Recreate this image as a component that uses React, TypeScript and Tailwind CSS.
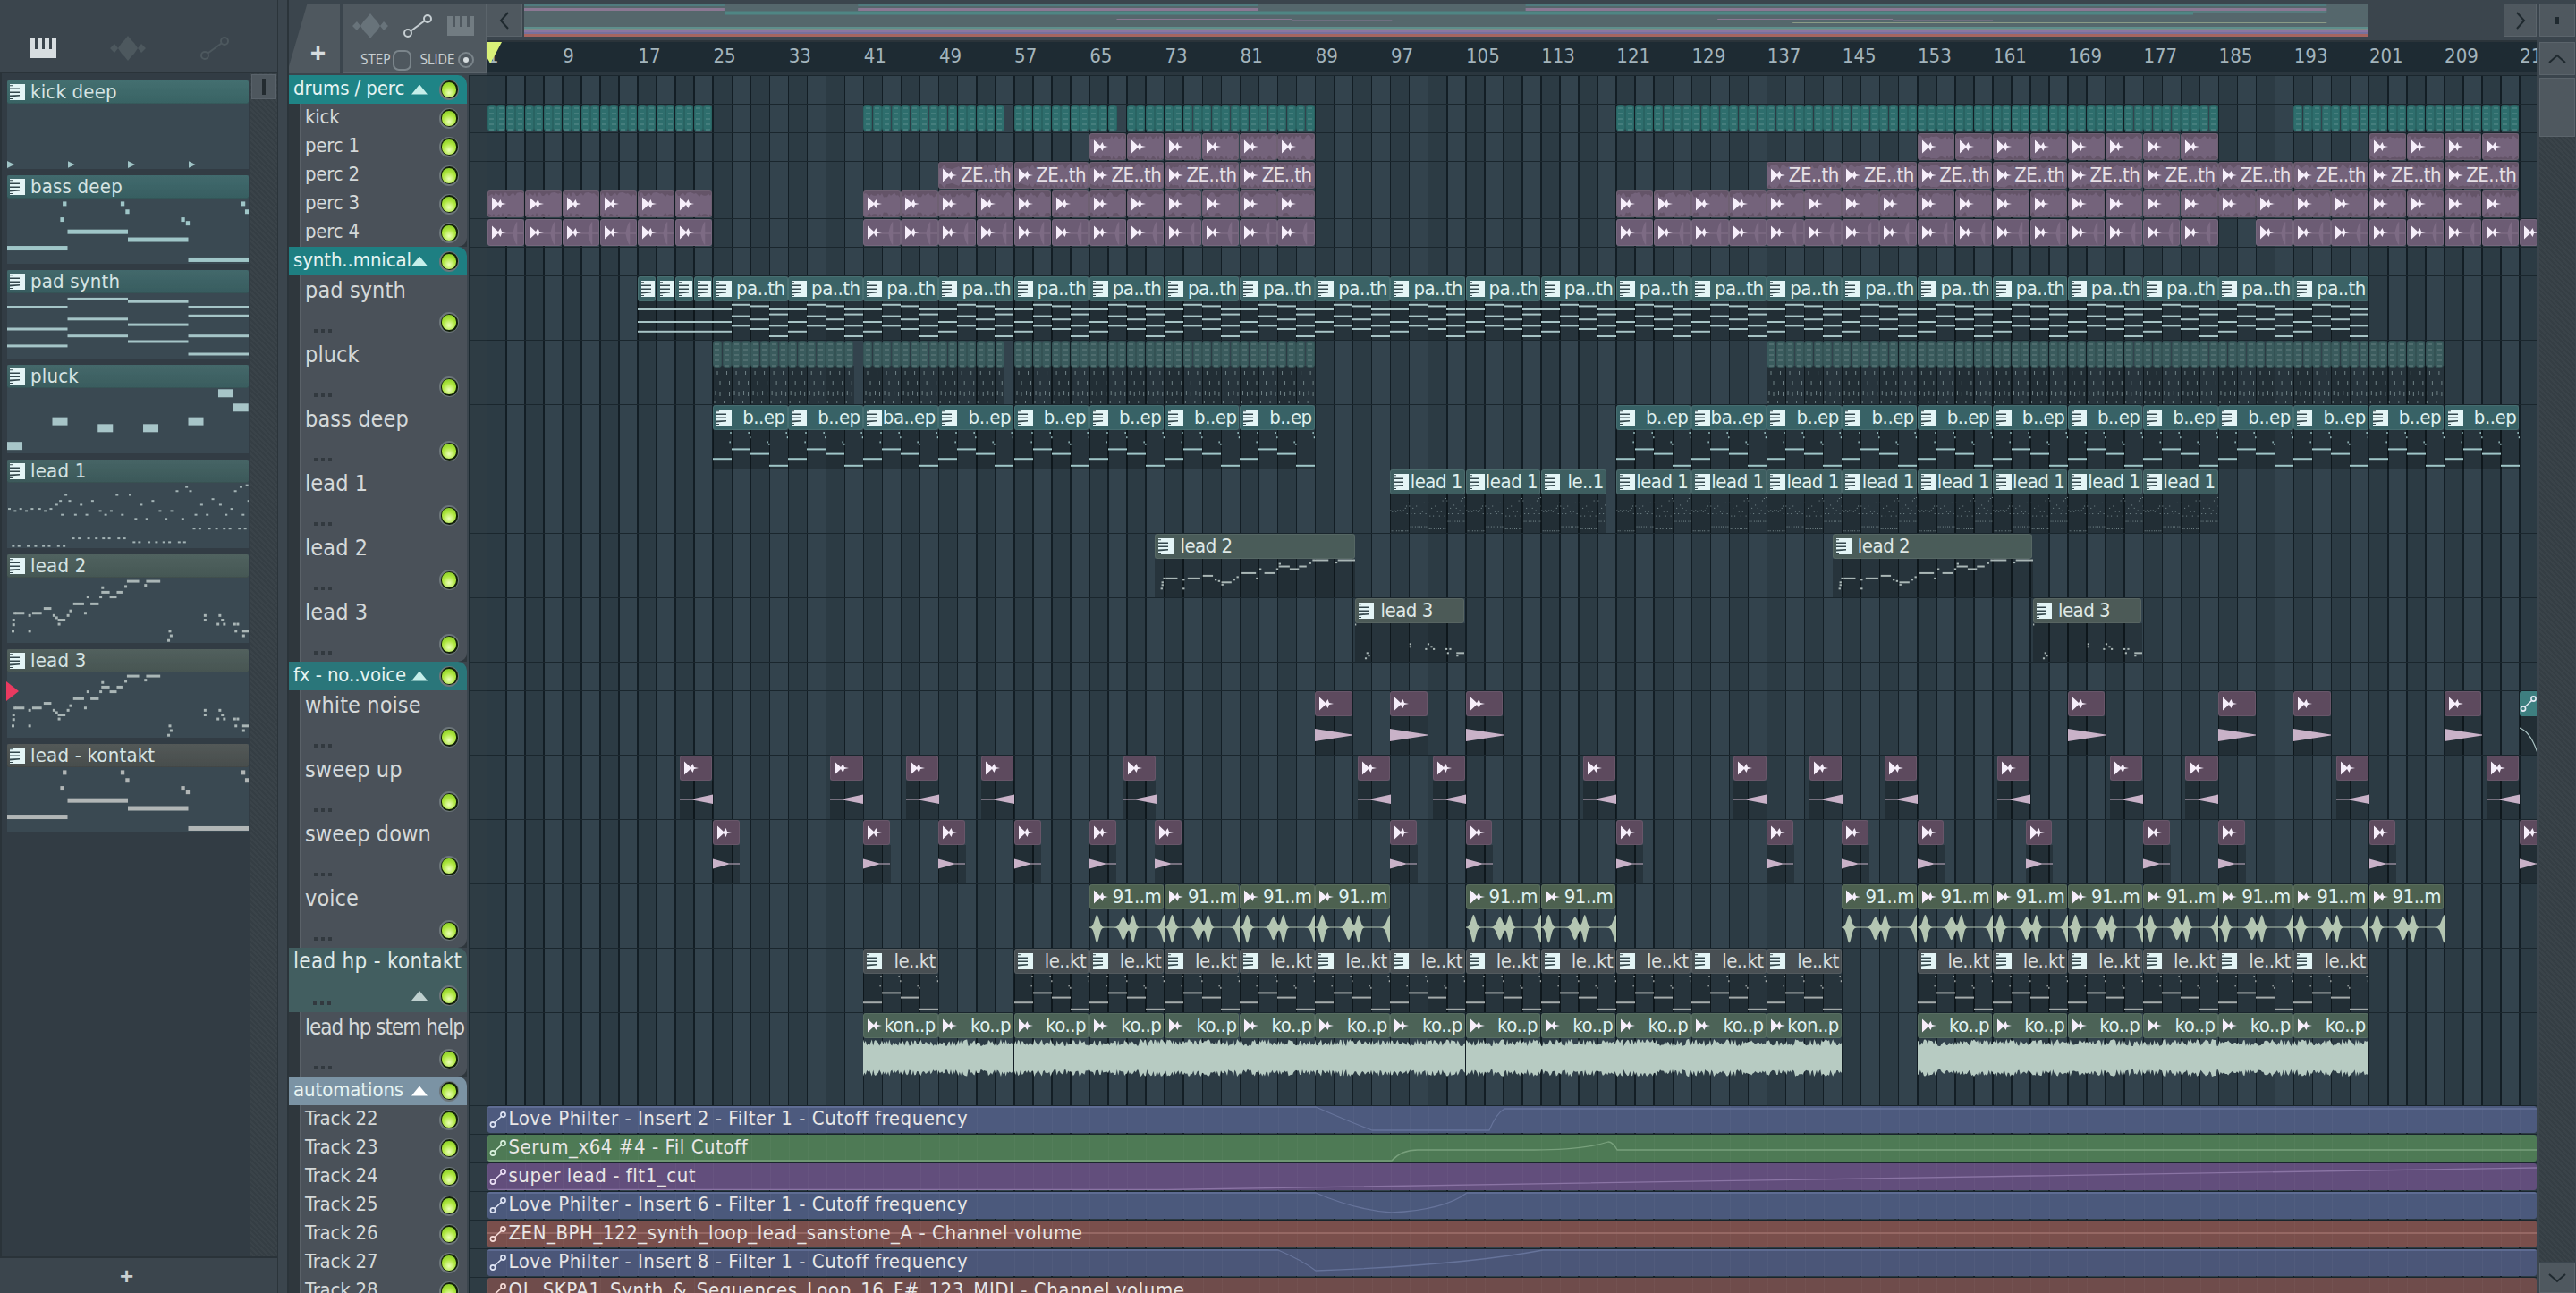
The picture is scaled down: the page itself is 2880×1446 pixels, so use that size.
import React from "react";

const BAR = 10.52;
const px = (bar: number) => (bar - 1) * BAR + 0.5;
const range = (a: number, b: number, s: number) => {
  const o: number[] = [];
  for (let i = a; i < b; i += s) o.push(i);
  return o;
};
const rnd = (i: number) => {
  const v = Math.sin(i * 12.9898) * 43758.5453;
  return v - Math.floor(v);
};

type Note = [number, number, number];
const BASS: Note[] = [
  [0, 0.78, 0.25], [0.25, 0.51, 0.25], [0.5, 0.64, 0.25], [0.75, 0.97, 0.25],
  [0.23, 0.05, 0.016], [0.22, 0.31, 0.016], [0.47, 0.05, 0.016], [0.49, 0.18, 0.016],
  [0.72, 0.31, 0.016], [0.74, 0.37, 0.016], [0.97, 0.05, 0.016], [0.985, 0.18, 0.015],
];
const PAD: Note[] = [
  [0, 0.2, 0.25], [0, 0.55, 0.25], [0, 0.82, 0.25],
  [0.25, 0.07, 0.25], [0.25, 0.39, 0.25], [0.25, 0.66, 0.25],
  [0.5, 0.11, 0.25], [0.5, 0.48, 0.25], [0.5, 0.75, 0.25],
  [0.75, 0.2, 0.25], [0.75, 0.34, 0.25], [0.75, 0.66, 0.25], [0.75, 0.95, 0.25],
];
const PLUCK: Note[] = [
  [0, 0.94, 0.063], [0.187, 0.51, 0.063], [0.375, 0.63, 0.063], [0.563, 0.63, 0.063],
  [0.75, 0.51, 0.063], [0.874, 0.02, 0.063], [0.937, 0.27, 0.062],
];
const L1: [number, number][] = [
  [27,510],[46,517],[65,510],[84,517],[103,510],[128,510],[147,517],[166,510],[185,496],[198,483],[216,463],[229,483],[204,530],[248,530],[267,496],[286,530],[305,483],[331,517],[349,530],[368,517],[387,463],[405,530],[431,463],[450,544],[468,496],[487,544],[507,483],[531,517],[551,544],[570,517],[588,450],[607,544],[620,436],[633,450],[651,530],[670,496],[689,530],[708,477],[733,496],[752,530],[771,510],[783,450],[802,436],[809,530],[822,430],[828,483],
  ...[40,59,90,115,141,160,191,210].map((x) => [x, 636] as [number, number]),
  ...[241,261,292,318,342,361,393,412].map((x) => [x, 610] as [number, number]),
  ...[444,462,494,519,544,563,595,613].map((x) => [x, 623] as [number, number]),
  ...[645,664,696,720,746,765,797,816].map((x) => [x, 577] as [number, number]),
];
const LEAD1: Note[] = L1.map(([x, y]) => [(x - 24) / 808, (y - 425) / 215, 0.005]);
const mk = (x1: number, x2: number, y: number): Note => [(x1 - 22) / 754, (y - 142) / 216, (x2 - x1) / 754];
const LEAD2: Note[] = [
  mk(48,76,260), mk(100,130,260), mk(136,160,244), mk(180,204,284), mk(228,262,228), mk(282,308,228),
  mk(316,342,188), mk(342,364,204), mk(364,382,188), mk(396,434,150), mk(456,500,150), mk(756,776,322),
  ...[[38,284],[38,300],[36,322],[88,322],[88,268],[42,260],[164,268],[172,276],[180,298],[208,268],[216,252],[270,204],[262,260],[316,172],[310,204],[388,168],[450,164],[526,322],[530,338],[522,354],[636,268],[636,284],[682,268],[676,298],[690,284],[696,298],[728,298],[738,298],[732,322],[756,338]].map(([x, y]) => mk(x, x + 5, y)),
];

function Notes({ notes, w, h, color, t, from = 0, to = 1, opacity = 1, minW = 1 }: { notes: Note[]; w: number; h: number; color: string; t: number; from?: number; to?: number; opacity?: number; minW?: number }) {
  const k = w / (to - from);
  return (
    <svg width={w} height={h} className="block" style={{ opacity }}>
      {notes.filter((n) => n[0] + n[2] > from && n[0] < to).map((n, i) => (
        <rect key={i} x={(n[0] - from) * k} y={n[1] * (h - t)} width={Math.max(minW, n[2] * k)} height={t} fill={color} />
      ))}
    </svg>
  );
}

function PianoGlyph() {
  return (
    <svg width="17" height="18" viewBox="0 0 17 18" className="shrink-0">
      <rect width="17" height="18" fill="#e4f5f6" />
      <path d="M0 4.5h11v1.6H0zM0 8.5h11v1.6H0zM0 12.5l11-.6v1.6L0 14.5z" fill="#33474c" />
      <path d="M0 1.2h3v1H0zM0 16h3v1H0z" fill="#33474c" />
    </svg>
  );
}
function AudioGlyph() {
  return (
    <svg width="18" height="16" viewBox="0 0 18 16" className="shrink-0">
      <path d="M1 0.5 L8 7 L10.5 3 L12 7 L17 8 L12 9 L10.5 13 L8 9 L1 15.5 Z" fill="#f6eefa" />
    </svg>
  );
}
function AutoGlyph({ color = "#e6eaf4" }: { color?: string }) {
  return (
    <svg width="20" height="20" viewBox="0 0 20 20" className="shrink-0">
      <circle cx="4" cy="15.5" r="2.6" fill="none" stroke={color} strokeWidth="1.6" />
      <circle cx="15.5" cy="4.5" r="2.6" fill="none" stroke={color} strokeWidth="1.6" />
      <path d="M6 13.5 L13.5 6.5" stroke={color} strokeWidth="1.6" />
    </svg>
  );
}
function PianoIcon({ color, dark }: { color: string; dark: string }) {
  return (
    <svg width="30" height="22" viewBox="0 0 30 22">
      <rect width="30" height="22" fill={color} />
      <path d="M6 0h3v12H6zM14 0h3v12h-3zM22 0h3v12h-3z" fill={dark} />
    </svg>
  );
}
function WaveIcon({ color }: { color: string }) {
  return (
    <svg width="40" height="28" viewBox="0 0 40 28">
      <path d="M0 14 L5 9 L9 14 L13 8 L16 5 L20 0 L24 5 L27 8 L31 14 L35 9 L40 14 L35 19 L31 14 L27 20 L24 23 L20 28 L16 23 L13 20 L9 14 L5 19 Z" fill={color} />
    </svg>
  );
}
function CurveIcon({ color }: { color: string }) {
  return (
    <svg width="34" height="28" viewBox="0 0 34 28">
      <circle cx="6" cy="22" r="4" fill="none" stroke={color} strokeWidth="2" />
      <circle cx="28" cy="6" r="4" fill="none" stroke={color} strokeWidth="2" />
      <path d="M9.5 19.5 L24.5 8.5" stroke={color} strokeWidth="2" />
    </svg>
  );
}

function Led() {
  return (
    <div className="w-[22px] h-[23px] rounded-full bg-[#6d767b] p-[1.5px] shrink-0">
      <div className="w-full h-full rounded-full bg-[#12200a] p-[1.5px]">
        <div className="w-full h-full rounded-full bg-[radial-gradient(circle_at_50%_70%,#eaffb8_0%,#aee63f_50%,#7cc31c_100%)]" />
      </div>
    </div>
  );
}
function Dots() {
  return (
    <div className="flex gap-[4px]">
      <div className="w-[4px] h-[4px] bg-[#32393f]" />
      <div className="w-[4px] h-[4px] bg-[#32393f]" />
      <div className="w-[4px] h-[4px] bg-[#32393f]" />
    </div>
  );
}
function Tri({ color }: { color: string }) {
  return <div className="w-[18px] h-[11px] shrink-0 [clip-path:polygon(50%_0,100%_100%,0_100%)]" style={{ background: color }} />;
}

type RowKind = "group" | "short" | "tall" | "sub";
function Header({ kind, label, bg, tri, round, tight }: { kind: RowKind; label: string; bg?: string; tri?: string; round?: boolean; tight?: boolean }) {
  if (kind === "group") {
    return (
      <div className="w-[199px] h-full rounded-tr-[10px] flex items-center pl-[5px] pr-[9px]" style={{ background: bg }}>
        <div className="flex-1 min-w-0 -mt-[3px] text-[22px] tracking-[-0.1px] text-[#e6f4f3] whitespace-nowrap">{label}</div>
        <Tri color={tri || "#c6efea"} />
        <div className="ml-[13px]"><Led /></div>
      </div>
    );
  }
  if (kind === "sub") {
    return (
      <div className="w-[199px] h-full rounded-tr-[10px] relative" style={{ background: bg }}>
        <div className="pl-[5px] pt-[1px] text-[24px] tracking-[0.3px] leading-[28px] text-[#dfe9e8] whitespace-nowrap">{label}</div>
        <div className="absolute left-[27px] top-[60px]"><Dots /></div>
        <div className="absolute right-[9px] top-[42px] flex items-center gap-[13px]"><Tri color="#bfd0cf" /><Led /></div>
      </div>
    );
  }
  const body = kind === "short" ? (
    <div className="h-full flex items-center pl-[5px] pr-[9px]">
      <div className="flex-1 -mt-[3px] text-[22px] tracking-[-0.2px] text-[#d5d9da] whitespace-nowrap">{label}</div>
      <Led />
    </div>
  ) : (
    <div className="h-full relative">
      <div className={`pl-[5px] pt-[3px] leading-[28px] text-[#d5d9da] whitespace-nowrap ${tight ? "text-[24px] tracking-[-1px]" : "text-[25px] tracking-[0.1px]"}`}>{label}</div>
      <div className="absolute left-[15px] top-[60px]"><Dots /></div>
      <div className="absolute right-[9px] top-[41px]"><Led /></div>
    </div>
  );
  return (
    <div className="w-[199px] h-full flex bg-[#2f373d]">
      <div className={`ml-[12px] flex-1 bg-[#4a5159] border-l border-[#5a6168] ${round ? "rounded-br-[10px]" : ""}`}>{body}</div>
    </div>
  );
}

function Clip({ bar, bars, bg, label, icon = "piano", h = 28, textClass = "text-[#dff0ef]", left, children }: { bar: number; bars: number; bg: string; label?: string; icon?: "piano" | "audio" | "none"; h?: number; textClass?: string; left?: boolean; children?: React.ReactNode }) {
  const w = bars * BAR - 0.6;
  return (
    <div className="absolute top-[1px]" style={{ left: px(bar), width: w }}>
      <div className="relative rounded-[3px] overflow-hidden flex items-center pl-[3px] border border-[#ffffff12]" style={{ height: h, background: bg }}>
        {children}
        {icon === "piano" && <div className="relative"><PianoGlyph /></div>}
        {icon === "audio" && <div className="relative"><AudioGlyph /></div>}
        {label && <div className={`relative flex-1 pr-[2px] -mt-[2px] text-[22px] tracking-[-0.5px] whitespace-nowrap ${left ? "pl-[7px]" : "text-right"} ${textClass}`}>{label}</div>}
      </div>
    </div>
  );
}
function Body({ bar, bars, top = 29, h = 43, children }: { bar: number; bars: number; top?: number; h?: number; children?: React.ReactNode }) {
  return (
    <div className="absolute bg-[#00000038]" style={{ left: px(bar), width: bars * BAR, top, height: h }}>
      {children}
    </div>
  );
}

function ragged(w: number, h: number, seed: number, base: number, amp: number, step = 2) {
  let top = "";
  let bot = "";
  for (let x = 0; x <= w; x += step) {
    const a = base + rnd(seed + x) * amp;
    top += `${x},${(h / 2 - a).toFixed(1)} `;
    bot = `${x},${(h / 2 + a).toFixed(1)} ` + bot;
  }
  return top + bot;
}
function PercWave({ w, seed }: { w: number; seed: number }) {
  return (
    <svg width={w} height={30} className="absolute left-0 top-0">
      <polygon points={ragged(w, 30, seed, 8, 6)} fill="#74637b" />
    </svg>
  );
}
function Perc4Wave({ w }: { w: number }) {
  const c = w * 0.72;
  return (
    <svg width={w} height={30} className="absolute left-0 top-0">
      <path d={`M${w * 0.3} 15 H${w} `} stroke="#85738a" strokeWidth="1" />
      <path d={`M${c - 3} 15 Q${c} 2 ${c + 2} 2 V28 Q${c} 28 ${c - 3} 15Z`} fill="#7d6b84" />
    </svg>
  );
}

function kickSegs(bars: number[], bg: string) {
  return bars.map((b) => (
    <div key={b} className="absolute top-[1px] h-[30px] rounded-[4px] flex justify-center border border-[#00000018]" style={{ left: px(b), width: BAR - 0.5, background: bg }}>
      <div className="w-[5px] h-full bg-[repeating-linear-gradient(0deg,#ffffff1c_0px,#ffffff1c_2px,transparent_2px,transparent_6px)]" />
    </div>
  ));
}

function VoiceWave({ w }: { w: number }) {
  const blobs = [[0.1, 0.04, 1], [0.45, 0.05, 0.8], [0.58, 0.035, 1], [1, 0.05, 1]];
  let top = "";
  let bot = "";
  for (let i = 0; i <= 84; i += 1) {
    const x = i / 84;
    let a = 0.6;
    blobs.forEach(([c, s, p]) => {
      a += p * 17 * Math.exp(-(((x - c) / s) ** 2));
    });
    top += `${(x * w).toFixed(1)},${(20 - a * 0.8).toFixed(1)} `;
    bot = `${(x * w).toFixed(1)},${(20 + a).toFixed(1)} ` + bot;
  }
  return (
    <svg width={w} height={42} className="block">
      <polygon points={top + bot} fill="#b4c6b2" />
    </svg>
  );
}

function LaneClips({ id }: { id: string }): React.ReactElement | null {
  const perc = "#645468";
  switch (id) {
    case "kick":
      return <>{kickSegs([...range(1, 25, 1), ...range(41, 56, 1), ...range(57, 68, 1), ...range(69, 89, 1), ...range(121, 185, 1), ...range(193, 217, 1)], "#2e6e6d")}</>;
    case "perc1":
      return <>{[...range(65, 89, 4), ...range(153, 185, 4), ...range(201, 217, 4)].map((b) => <Clip key={b} bar={b} bars={4} bg={perc} icon="audio" h={30}><PercWave w={42} seed={b} /></Clip>)}</>;
    case "perc2":
      return <>{[...range(49, 89, 8), ...range(137, 217, 8)].map((b) => <Clip key={b} bar={b} bars={8} bg={perc} icon="audio" h={30} label="ZE..th" textClass="text-[#e6e0e6]"><PercWave w={84} seed={b} /></Clip>)}</>;
    case "perc3":
      return <>{[...range(1, 25, 4), ...range(41, 89, 4), ...range(121, 217, 4)].map((b) => <Clip key={b} bar={b} bars={4} bg={perc} icon="audio" h={30}><PercWave w={42} seed={b + 300} /></Clip>)}</>;
    case "perc4":
      return <>{[...range(1, 25, 4), ...range(41, 89, 4), ...range(121, 185, 4), ...range(189, 217, 4)].map((b) => <Clip key={b} bar={b} bars={4} bg="#6c5c74" icon="audio" h={30}><Perc4Wave w={42} /></Clip>)}<Clip bar={217} bars={2} bg="#6c5c74" icon="audio" h={30} /></>;
    case "pad":
      return (
        <>
          <Body bar={17} bars={184} />
          {range(17, 25, 2).map((b) => (
            <React.Fragment key={b}>
              <Clip bar={b} bars={2} bg="#3b6366" />
              <div className="absolute top-[29px]" style={{ left: px(b) }}>
                <Notes notes={[[0, 0.2, 1], [0, 0.55, 1], [0, 0.82, 1]]} w={21.04} h={42} color="#a8c4c6" t={2} />
              </div>
            </React.Fragment>
          ))}
          {range(25, 201, 8).map((b) => (
            <React.Fragment key={b}>
              <Clip bar={b} bars={8} bg="#3b6366" label="pa..th" />
              <div className="absolute top-[29px]" style={{ left: px(b) }}>
                <Notes notes={PAD} w={84} h={42} color="#a8c4c6" t={2} />
              </div>
            </React.Fragment>
          ))}
        </>
      );
    case "pluck": {
      const groups = [[25, 40], [41, 56], [57, 89], [137, 209]];
      return (
        <>
          {groups.map(([a, b]) => (
            <React.Fragment key={a}>
              <Body bar={a} bars={b - a} />
              {kickSegs(range(a, b, 1), "#3a5b5d")}
              <svg className="absolute top-[31px]" style={{ left: px(a) }} width={(b - a) * BAR} height={40}>
                {range(0, b - a, 1).map((i) => (
                  <g key={i} stroke="#6f8185" strokeWidth="1">
                    <path d={`M${i * BAR + 5} 4v4M${i * BAR + 8} 15v4M${i * BAR + 3} 26v5M${i * BAR + 8} 27v5M${i * BAR + 2} 37v3`} />
                  </g>
                ))}
              </svg>
            </React.Fragment>
          ))}
        </>
      );
    }
    case "bass":
      return (
        <>
          {[...range(25, 89, 8), ...range(121, 217, 8)].map((b) => (
            <React.Fragment key={b}>
              <Body bar={b} bars={8} />
              <Clip bar={b} bars={8} bg="#386266" label={b === 41 || b === 129 ? "ba..ep" : "b..ep"} />
              <div className="absolute top-[29px]" style={{ left: px(b) }}>
                <Notes notes={BASS} w={84} h={42} color="#a0c6c8" t={2} />
              </div>
            </React.Fragment>
          ))}
        </>
      );
    case "lead1":
      return (
        <>
          {[[97, 8, "lead 1"], [105, 8, "lead 1"], [113, 7, "le..1"], ...range(121, 185, 8).map((b) => [b, 8, "lead 1"])].map(([b, n, l]) => (
            <React.Fragment key={b as number}>
              <Body bar={b as number} bars={n as number} />
              <Clip bar={b as number} bars={n as number} bg="#3e5e60" label={l as string} />
              <div className="absolute top-[31px] overflow-hidden" style={{ left: px(b as number), width: (n as number) * BAR }}>
                <Notes notes={LEAD1} w={84} h={40} color="#7b8d91" t={1} />
              </div>
            </React.Fragment>
          ))}
        </>
      );
    case "lead2":
      return (
        <>
          {[72, 144].map((b) => (
            <React.Fragment key={b}>
              <Body bar={b} bars={21.3} />
              <Clip bar={b} bars={21.3} bg="#4a5c59" label="lead 2" left textClass="text-[#dfe8e6]" />
              <div className="absolute top-[28px]" style={{ left: px(b) }}>
                <Notes notes={LEAD2} w={224} h={42} color="#aab7b6" t={2} from={0} to={0.63} />
              </div>
            </React.Fragment>
          ))}
        </>
      );
    case "lead3":
      return (
        <>
          {[93.3, 165.3].map((b) => (
            <React.Fragment key={b}>
              <Body bar={b} bars={11.6} />
              <Clip bar={b} bars={11.6} bg="#4c5a57" label="lead 3" left textClass="text-[#dfe8e6]" />
              <div className="absolute top-[28px]" style={{ left: px(b) }}>
                <Notes notes={LEAD2} w={122} h={42} color="#aab7b6" t={2} from={0.63} to={1} />
              </div>
            </React.Fragment>
          ))}
        </>
      );
    case "noise":
      return (
        <>
          {[89, 97, 105, 169, 185, 193, 209].map((b) => (
            <React.Fragment key={b}>
              <Body bar={b} bars={4} />
              <Clip bar={b} bars={4} bg="#5d4a5e" icon="audio" />
              <svg className="absolute top-[40px]" style={{ left: px(b) }} width={42} height={20}>
                <path d="M0 3 L42 9.5 V10.5 L0 17Z" fill="#c9b2c8" />
              </svg>
            </React.Fragment>
          ))}
          <Body bar={217} bars={2} />
          <div className="absolute top-[1px] h-[28px] rounded-[3px] bg-[#3e7f80] flex items-center" style={{ left: px(217), width: 24 }}><AutoGlyph /></div>
          <svg className="absolute top-[30px]" style={{ left: px(217) }} width={21} height={40}><path d="M0 12 Q12 16 20 40" stroke="#a9c2c2" strokeWidth="1.2" fill="none" /></svg>
        </>
      );
    case "up":
      return (
        <>
          {[21.5, 37.5, 45.5, 53.5, 68.6, 93.5, 101.5, 117.5, 133.5, 141.5, 149.5, 161.5, 173.5, 181.5, 197.5, 213.5].map((b) => (
            <React.Fragment key={b}>
              <Body bar={b} bars={3.5} />
              <Clip bar={b} bars={3.5} bg="#5d4a5e" icon="audio" />
              <svg className="absolute top-[40px]" style={{ left: px(b) }} width={37} height={20}>
                <path d="M0 9.5 H14 L37 4.5 V15 L14 10.5 H0Z" fill="#c9b2c8" />
              </svg>
            </React.Fragment>
          ))}
        </>
      );
    case "down":
      return (
        <>
          {[25, 41, 49, 57, 65, 72, 97, 105, 121, 137, 145, 153, 164.5, 177, 185, 201, 217].map((b) => (
            <React.Fragment key={b}>
              <Body bar={b} bars={2.9} />
              <Clip bar={b} bars={2.9} bg="#5d4a5e" icon="audio" />
              <svg className="absolute top-[40px]" style={{ left: px(b) }} width={30} height={20}>
                <path d="M0 4.5 L18 9.5 H30 V10.5 H18 L0 15.5Z" fill="#c9b2c8" />
              </svg>
            </React.Fragment>
          ))}
        </>
      );
    case "voice":
      return (
        <>
          {[...range(65, 97, 8), ...range(105, 121, 8), ...range(145, 209, 8)].map((b) => (
            <React.Fragment key={b}>
              <Clip bar={b} bars={8} bg="#4d6150" icon="audio" label="91..m" />
              <div className="absolute top-[29px]" style={{ left: px(b) }}><VoiceWave w={84} /></div>
            </React.Fragment>
          ))}
        </>
      );
    case "hp":
      return (
        <>
          {[41, ...range(57, 145, 8), ...range(153, 201, 8)].map((b) => (
            <React.Fragment key={b}>
              <Body bar={b} bars={8} />
              <Clip bar={b} bars={8} bg="#484f53" label="le..kt" textClass="text-[#d8dcdc]" />
              <div className="absolute top-[29px]" style={{ left: px(b) }}>
                <Notes notes={BASS} w={84} h={42} color="#a5abab" t={2} />
              </div>
            </React.Fragment>
          ))}
        </>
      );
    case "stem":
      return (
        <>
          {[...range(41, 145, 8), ...range(153, 201, 8)].map((b) => (
            <React.Fragment key={b}>
              <Clip bar={b} bars={8} bg="#4c6357" icon="audio" label={b === 41 || b === 137 ? "kon..p" : "ko..p"} />
              <svg className="absolute top-[30px]" style={{ left: px(b) }} width={85} height={42}>
                <polygon points={ragged(85, 42, b, 13, 8, 1.4)} fill="#b7cbc2" />
              </svg>
            </React.Fragment>
          ))}
        </>
      );
    default:
      return null;
  }
}

const G1 = "#1f8486";
const rows: { kind: RowKind; label: string; id?: string; bg?: string; tri?: string; round?: boolean; tight?: boolean }[] = [
  { kind: "group", label: "drums / perc", bg: G1 },
  { kind: "short", label: "kick", id: "kick" },
  { kind: "short", label: "perc 1", id: "perc1" },
  { kind: "short", label: "perc 2", id: "perc2" },
  { kind: "short", label: "perc 3", id: "perc3" },
  { kind: "short", label: "perc 4", id: "perc4", round: true },
  { kind: "group", label: "synth..mnical", bg: "#1e7f82" },
  { kind: "tall", label: "pad synth", id: "pad" },
  { kind: "tall", label: "pluck", id: "pluck" },
  { kind: "tall", label: "bass deep", id: "bass" },
  { kind: "tall", label: "lead 1", id: "lead1" },
  { kind: "tall", label: "lead 2", id: "lead2" },
  { kind: "tall", label: "lead 3", id: "lead3", round: true },
  { kind: "group", label: "fx - no..voice", bg: "#2a767a" },
  { kind: "tall", label: "white noise", id: "noise" },
  { kind: "tall", label: "sweep up", id: "up" },
  { kind: "tall", label: "sweep down", id: "down" },
  { kind: "tall", label: "voice", id: "voice", round: true },
  { kind: "sub", label: "lead hp - kontakt", id: "hp", bg: "#425e60" },
  { kind: "tall", label: "lead hp stem help", id: "stem", round: true, tight: true },
  { kind: "group", label: "automations", bg: "#7b93a4", tri: "#ffffff" },
  { kind: "short", label: "Track 22", id: "a0" },
  { kind: "short", label: "Track 23", id: "a1" },
  { kind: "short", label: "Track 24", id: "a2" },
  { kind: "short", label: "Track 25", id: "a3" },
  { kind: "short", label: "Track 26", id: "a4" },
  { kind: "short", label: "Track 27", id: "a5" },
  { kind: "short", label: "Track 28", id: "a6" },
];

const autos: { text: string; bg: string; line: string; icon: string; curve?: string }[] = [
  { text: "Love Philter - Insert 2 - Filter 1 - Cutoff frequency", bg: "#4d5a7e", line: "#66739a", icon: "#dfe4f4", curve: "M0 1 H926 Q970 20 989 27 H1120 Q1128 8 1137 3 H2292" },
  { text: "Serum_x64 #4 - Fil Cutoff", bg: "#4e7a55", line: "#78a07c", icon: "#d8f0dc", curve: "M0 29 H1011 Q1022 17 1040 17 H1170 Q1225 17 1253 8 Q1258 8 1263 17 H2292" },
  { text: "super lead - flt1_cut", bg: "#624e7c", line: "#8a74a4", icon: "#ece0f6", curve: "M0 29.5 H759 L2292 5" },
  { text: "Love Philter - Insert 6 - Filter 1 - Cutoff frequency", bg: "#4b597c", line: "#66739a", icon: "#dfe4f4", curve: "M0 1 H926 Q970 20 1011 23 Q1070 20 1095 1 H2292" },
  { text: "ZEN_BPH_122_synth_loop_lead_sanstone_A - Channel volume", bg: "#7a4f4c", line: "#a0716c", icon: "#f6dcd8", curve: "M0 14 H2292" },
  { text: "Love Philter - Insert 8 - Filter 1 - Cutoff frequency", bg: "#4b5678", line: "#66739a", icon: "#dfe4f4", curve: "M0 1 H884 Q910 12 926 24 Q1090 18 1180 1 H2292" },
  { text: "OL_SKPA1_Synth_&_Sequences_Loop_16_F#_123_MIDI - Channel volume", bg: "#6f4c4b", line: "#8f6b68", icon: "#f6dcd8" },
];

function AutoClip({ a }: { a: (typeof autos)[number] }) {
  return (
    <div className="absolute left-[0.5px] right-0 top-[1px] h-[30px] rounded-[3px] overflow-hidden flex items-center pl-[2px] gap-[2px] bg-[repeating-linear-gradient(90deg,#ffffff08_0px,#ffffff08_1px,transparent_1px,transparent_21.04px)]" style={{ backgroundColor: a.bg }}>
      {a.curve && (
        <svg width={2292} height={30} className="absolute left-0 top-0">
          <path d={a.curve} fill="none" stroke={a.line} strokeWidth="1.3" />
        </svg>
      )}
      <div className="relative"><AutoGlyph color={a.icon} /></div>
      <div className="relative -mt-[3px] text-[22px] tracking-[0.55px] text-[#e8e6e6] whitespace-nowrap">{a.text}</div>
    </div>
  );
}

function PickerClip({ name, bg, glyphNotes, color, t, kick }: { name: string; bg: string; glyphNotes?: Note[]; color: string; t: number; kick?: boolean }) {
  return (
    <div className="w-[270px] h-[99px] flex flex-col bg-[#3a4952] shrink-0">
      <div className="h-[26px] rounded-[2px] flex items-center pl-[3px] gap-[6px] border-b border-[#00000030] bg-[linear-gradient(180deg,#ffffff08,#00000010)]" style={{ backgroundColor: bg }}>
        <PianoGlyph />
        <span className="text-[22px] tracking-[0.2px] text-[#d6e4e4] whitespace-nowrap">{name}</span>
      </div>
      <div className="flex-1 relative">
        {kick ? (
          <div className="h-full flex items-end pb-[1px]">
            {[0, 1, 2, 3].map((i) => (
              <div key={i} className="w-[67.5px]"><div className="w-[8px] h-[8px] bg-[#9fc4c6] [clip-path:polygon(0_0,100%_50%,0_100%)]" /></div>
            ))}
          </div>
        ) : (
          <Notes notes={glyphNotes || []} w={270} h={73} color={color} t={t} minW={3} />
        )}
      </div>
    </div>
  );
}

function Minimap() {
  const lanes: [number, number, string, number[][]][] = [
    [1.5, 1, "#4d9090", [[1, 25], [41, 89], [121, 217]]],
    [5, 3, "#8b7893", [[1, 25], [41, 89], [121, 217]]],
    [8.5, 4, "#4f8684", [[25, 201]]],
    [8.5, 1, "#5d8f8f", [[201, 217]]],
    [17, 1, "#8a7893", [[72, 93], [144, 165]]],
    [18.5, 1, "#8a7893", [[93, 105], [165, 177]]],
    [21, 1, "#8b9b86", [[153, 217]]],
  ];
  return (
    <svg width={2061} height={37} className="block">
      <rect width={2061} height={37} fill="#55676c" />
      {lanes.map(([y, h, c, spans], i) => (
        <g key={i}>
          {spans.map(([a, b], j) => <rect key={j} x={(a - 1) * 9.33} y={y} width={(b - a) * 9.33} height={h} fill={c} />)}
        </g>
      ))}
      <rect y={26} width={2061} height={2} fill="#5f8f8c" />
      <rect y={28} width={2061} height={2} fill="#7f8b88" />
      <rect y={30} width={2061} height={2} fill="#8a76a0" />
      <rect y={32} width={2061} height={2} fill="#76709c" />
      <rect y={34} width={2061} height={3} fill="#a5655f" />
    </svg>
  );
}

export default function App() {
  const pick: { name: string; bg: string; notes?: Note[]; color: string; t: number; kick?: boolean }[] = [
    { name: "kick deep", bg: "#3d6a6b", color: "", t: 0, kick: true },
    { name: "bass deep", bg: "#3b6568", notes: BASS, color: "#9fc6c8", t: 5 },
    { name: "pad synth", bg: "#3c6366", notes: PAD, color: "#a5c5c7", t: 3 },
    { name: "pluck", bg: "#3e6365", notes: PLUCK, color: "#a7c5c8", t: 9 },
    { name: "lead 1", bg: "#405f60", notes: LEAD1, color: "#a3b3b5", t: 2 },
    { name: "lead 2", bg: "#4a5d5a", notes: LEAD2, color: "#aab6b6", t: 3 },
    { name: "lead 3", bg: "#4c5b58", notes: LEAD2, color: "#aab6b6", t: 3 },
    { name: "lead - kontakt", bg: "#4d5352", notes: BASS, color: "#b1b6b6", t: 5 },
  ];
  return (
    <div className="w-[2880px] h-[1446px] flex overflow-hidden bg-[#3b454d] [font-family:'DejaVu_Sans',sans-serif] [font-stretch:condensed]">
      {/* Picker */}
      <div className="w-[311px] h-full flex flex-col shrink-0 border-r border-[#2b343a]">
        <div className="h-[82px] shrink-0 pt-[28px] flex items-center pl-[33px] gap-[60px] border-b-2 border-[#2a3339]">
          <PianoIcon color="#d8dee1" dark="#3b454d" />
          <WaveIcon color="#4d585e" />
          <CurveIcon color="#4d585e" />
        </div>
        <div className="flex-1 flex bg-[#323c44] border-l-2 border-[#2a3339] border-b-2 relative">
          <div className="w-[278px] flex flex-col gap-[7px] pl-[6px] pt-[8px]">
            {pick.map((p) => (
              <PickerClip key={p.name} name={p.name} bg={p.bg} glyphNotes={p.notes} color={p.color} t={p.t} kick={p.kick} />
            ))}
          </div>
          <div className="w-[31px] border-l border-[#2a3339] bg-[repeating-linear-gradient(45deg,#353e44_0px,#353e44_2px,#3a4349_2px,#3a4349_4px)]">
            <div className="h-[28px] mx-[1px] mt-[1px] bg-[#4e575e] border border-[#59626a] flex items-center justify-center">
              <div className="w-[4px] h-[18px] bg-[#232b30]" />
            </div>
          </div>
          <div className="absolute left-[5px] top-[680px] w-[14px] h-[22px] bg-[#ea3a60] [clip-path:polygon(0_0,100%_50%,0_100%)]" />
        </div>
        <div className="h-[39px] shrink-0 flex items-center pl-[134px]">
          <div className="text-[26px] font-bold leading-none text-[#c9cfd2] [font-family:'Liberation_Sans',sans-serif]">+</div>
        </div>
      </div>
      <div className="w-[12px] shrink-0 border-r-2 border-[#2b343a]" />
      {/* Track column */}
      <div className="w-[221px] h-full shrink-0 flex flex-col">
        <div className="h-[84px] shrink-0 flex pt-[4px] pb-[2px] gap-[3px] pr-[0px]">
          <div className="w-[57px] bg-[#4f585f] flex items-end justify-center pb-[8px] pl-[8px] [clip-path:polygon(36%_0,100%_0,100%_100%,0_100%,0_90%)]">
            <span className="text-[30px] font-bold leading-none text-[#d7dcdf] [font-family:'Liberation_Sans',sans-serif]">+</span>
          </div>
          <div className="flex-1 bg-[#4f585f] flex flex-col border border-[#5b646b]">
            <div className="h-[38px] flex items-center pl-[10px] gap-[16px] pt-[10px]">
              <WaveIcon color="#68737a" />
              <CurveIcon color="#c6ced2" />
              <PianoIcon color="#727c82" dark="#4f585f" />
            </div>
            <div className="flex-1 flex items-center pl-[19px] text-[15px] text-[#c6ced2] pt-[10px]">
              <span>STEP</span>
              <div className="w-[21px] h-[23px] rounded-[7px] border-2 border-[#7b858b] ml-[3px]" />
              <span className="ml-[9px]">SLIDE</span>
              <div className="w-[18px] h-[18px] rounded-full border-2 border-[#7b858b] ml-[4px] flex items-center justify-center"><div className="w-[6px] h-[6px] rounded-full bg-[#d6dcdf]" /></div>
            </div>
          </div>
        </div>
        <div className="flex-1 overflow-hidden">
          {rows.map((r, i) => (
            <div key={i} className={`flex ${r.kind === "short" || r.kind === "group" ? "h-[32px]" : "h-[72px]"}`}>
              <Header kind={r.kind} label={r.label} bg={r.bg} tri={r.tri} round={r.round} tight={r.tight} />
              <div className="ml-[2px] w-[20px] bg-[#2e3c44] border-t border-[#1c2930] border-l border-l-[#1c2930]" />
            </div>
          ))}
        </div>
      </div>
      {/* Timeline */}
      <div className="w-[2292px] h-full shrink-0 flex flex-col">
        <div className="h-[47px] shrink-0 flex items-center bg-[#3b454d] border-b-2 border-[#2b343a]">
          <div className="w-[40px] h-[37px] bg-[#4f585f] border border-[#5b646b] flex items-center justify-center">
            <svg width="14" height="24" viewBox="0 0 14 24"><path d="M11 3 L3 12 L11 21" fill="none" stroke="#1f292f" strokeWidth="2" /></svg>
          </div>
          <div className="ml-[2px] h-[37px]"><Minimap /></div>
          <div className="flex-1" />
          <div className="w-[37px] h-[37px] bg-[#4f585f] border border-[#5b646b] flex items-center justify-center">
            <svg width="14" height="24" viewBox="0 0 14 24"><path d="M3 3 L11 12 L3 21" fill="none" stroke="#1f292f" strokeWidth="2" /></svg>
          </div>
        </div>
        <div className="h-[37px] shrink-0 flex bg-[#1e2b33] border-b-4 border-[#2a363e] overflow-hidden relative">
          {range(1, 221, 8).map((b) => (
            <div key={b} className="w-[84.16px] shrink-0 pl-[1px] text-[22px] leading-[32px] text-[#a3b4bc] whitespace-nowrap">{b}</div>
          ))}
          <div className="absolute left-0 top-0 w-[17px] h-[24px] bg-[#d8f078] [clip-path:polygon(0_0,100%_0,25%_100%,0_70%)]" />
        </div>
        <div className="flex-1 overflow-hidden bg-[repeating-linear-gradient(90deg,#131e25_0px,#131e25_1.5px,#2c3b44_1.5px,#2c3b44_21.04px,#131e25_21.04px,#131e25_22.54px,#33434d_22.54px,#33434d_42.08px)]">
          {rows.map((r, i) => {
            const auto = r.id && r.id[0] === "a" && r.id.length === 2 ? autos[Number(r.id[1])] : null;
            return (
              <div key={i} className={`relative shadow-[inset_0_1px_0_#1a262d] ${r.kind === "short" || r.kind === "group" ? "h-[32px]" : "h-[72px]"}`}>
                {auto ? <AutoClip a={auto} /> : r.id ? <LaneClips id={r.id} /> : null}
              </div>
            );
          })}
        </div>
      </div>
      {/* Scroll column */}
      <div className="ml-[3px] w-[40px] h-full shrink-0 flex flex-col gap-[1px]">
        <div className="mt-[4px] h-[37px] bg-[#4f585f] border border-[#5b646b] flex items-center justify-center">
          <div className="w-[4px] h-[8px] bg-[#1f292f]" />
        </div>
        <div className="mt-[5px] h-[37px] bg-[#4f585f] border border-[#5b646b] flex items-center justify-center">
          <svg width="24" height="14" viewBox="0 0 24 14"><path d="M3 11 L12 3 L21 11" fill="none" stroke="#1f292f" strokeWidth="2" /></svg>
        </div>
        <div className="flex-1 mt-[2px] flex flex-col bg-[repeating-linear-gradient(45deg,#353e44_0px,#353e44_2px,#3a4349_2px,#3a4349_4px)]">
          <div className="h-[66px] bg-[#4f585f] border border-[#5b646b]" />
        </div>
        <div className="h-[34px] bg-[#4f585f] border border-[#5b646b] flex items-center justify-center">
          <svg width="24" height="14" viewBox="0 0 24 14"><path d="M3 3 L12 11 L21 3" fill="none" stroke="#1f292f" strokeWidth="2" /></svg>
        </div>
      </div>
    </div>
  );
}
